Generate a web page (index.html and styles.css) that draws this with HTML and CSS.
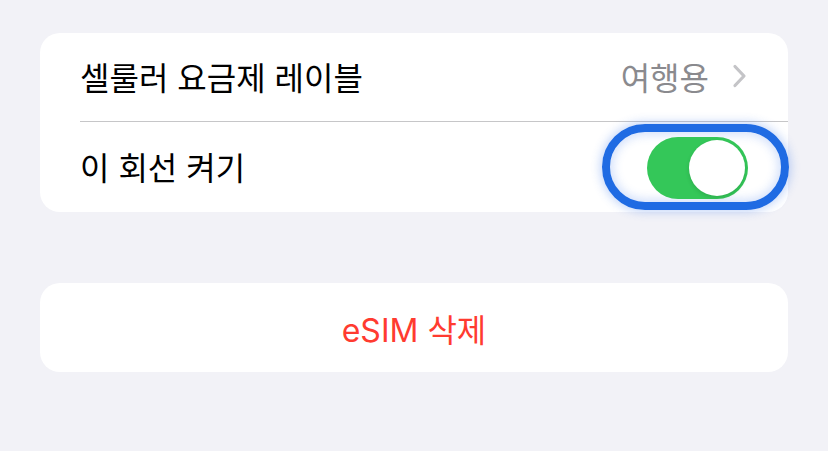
FILE: index.html
```html
<!DOCTYPE html>
<html lang="ko">
<head>
<meta charset="utf-8">
<link rel="stylesheet" href="styles.css">
</head>
<body>
<div class="page">
  <div class="group">
    <div class="row">
      <div class="row-inner divided">
        <span class="label">셀룰러 요금제 레이블</span>
        <span class="detail">여행용
          <svg class="chev" width="17" height="24" viewBox="0 0 17 24"><path d="M4 2.5 L13 12 L4 21.5" fill="none" stroke="#c4c4c7" stroke-width="3.2" stroke-linecap="round" stroke-linejoin="round"/></svg>
        </span>
      </div>
    </div>
    <div class="row">
      <div class="row-inner toggle-row">
        <span class="label">이 회선 켜기</span>
        <span class="focus-ring"><span class="switch on"><span class="knob"></span></span></span>
      </div>
    </div>
  </div>
  <div class="group">
    <div class="row center">
      <span class="danger">eSIM 삭제</span>
    </div>
  </div>
</div>
</body>
</html>
```
FILE: styles.css
```css
html, body {
  margin: 0;
  padding: 0;
  background: #f2f2f7;
}
body {
  font-family: "Noto Sans CJK KR", "Noto Sans", sans-serif;
  -webkit-font-smoothing: antialiased;
}
.page {
  padding: 33px 40px 0 40px;
  display: flex;
  flex-direction: column;
  gap: 71px;
}
.group {
  background: #ffffff;
  border-radius: 20px;
}
.row {
  padding-left: 40px;
  display: flex;
  align-items: stretch;
}
.row-inner {
  flex: 1;
  display: flex;
  align-items: center;
  justify-content: space-between;
  height: 89px;
  box-sizing: border-box;
}
.divided {
  border-bottom: 1px solid #c6c6c8;
  padding-right: 40px;
}
.toggle-row {
  height: 90px;
  padding-right: 0;
  margin-right: -1px;
}
.label {
  font-size: 32px;
  color: #000;
  position: relative;
  top: -1px;
}
.detail {
  display: flex;
  align-items: center;
  gap: 22px;
  font-size: 32px;
  color: #8a8a8e;
  position: relative;
  top: -1px;
}
.chev { display: block; }
.focus-ring {
  display: flex;
  align-items: center;
  justify-content: center;
  width: 187px;
  height: 86px;
  box-sizing: border-box;
  border: 8px solid #1f6be3;
  border-radius: 43px;
  padding: 1px 0 0 4px;
  box-shadow: 0 0 10px 2px rgba(60, 120, 235, 0.30), inset 0 0 10px 3px rgba(60, 120, 235, 0.22);
}
.switch {
  width: 101px;
  height: 62px;
  border-radius: 31px;
  background: #34c759;
  display: flex;
  align-items: center;
  justify-content: flex-end;
  padding: 3px;
  box-sizing: border-box;
}
.knob {
  width: 56px;
  height: 56px;
  border-radius: 50%;
  background: #fff;
  box-shadow: 0 2px 4px rgba(0,0,0,0.12);
}
.center {
  padding-left: 0;
  height: 89px;
  justify-content: center;
  align-items: center;
}
.danger {
  font-family: "Inter", "Noto Sans CJK KR", sans-serif;
  font-size: 32px;
  color: #ff3b30;
}
```
